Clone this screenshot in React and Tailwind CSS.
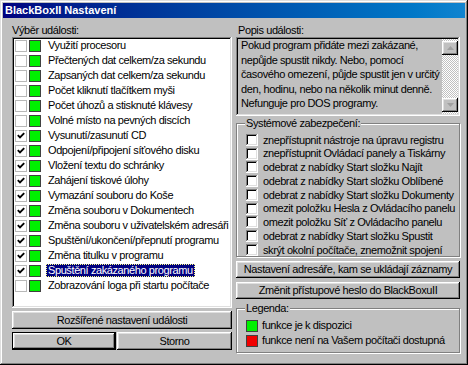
import React from 'react';

const raised = 'shadow-[inset_-1px_-1px_#000,inset_1px_1px_#fff,inset_-2px_-2px_#808080,inset_2px_2px_#dfdfdf]';
const sunken = 'shadow-[inset_-1px_-1px_#fff,inset_1px_1px_#808080,inset_-2px_-2px_#dfdfdf,inset_2px_2px_#000]';

const events = [
  ['Využití procesoru', false],
  ['Přečtených dat celkem/za sekundu', false],
  ['Zapsaných dat celkem/za sekundu', false],
  ['Počet kliknutí tlačítkem myši', false],
  ['Počet úhozů a stisknuté klávesy', false],
  ['Volné místo na pevných discích', false],
  ['Vysunutí/zasunutí CD', true],
  ['Odpojení/připojení síťového disku', true],
  ['Vložení textu do schránky', true],
  ['Zahájení tiskové úlohy', true],
  ['Vymazání souboru do Koše', true],
  ['Změna souboru v Dokumentech', true],
  ['Změna souboru v uživatelském adresáři', true],
  ['Spuštění/ukončení/přepnutí programu', true],
  ['Změna titulku v programu', true],
  ['Spuštění zakázaného programu', true, true],
  ['Zobrazování loga při startu počítače', false],
];

const security = [
  'znepřístupnit nástroje na úpravu registru',
  'znepřístupnit Ovládací panely a Tiskárny',
  'odebrat z nabídky Start složku Najít',
  'odebrat z nabídky Start složku Oblíbené',
  'odebrat z nabídky Start složku Dokumenty',
  'omezit položku Hesla z Ovládacího panelu',
  'omezit položku Síť z Ovládacího panelu',
  'odebrat z nabídky Start složku Spustit',
  'skrýt okolní počítače, znemožnit spojení',
];

const Check = () => (
  <svg width="8" height="7" viewBox="0 0 8 7" className="block">
    <path d="M0.8 3.2 L3 5.4 L7.2 1.2" fill="none" stroke="#000" strokeWidth="1.9" />
  </svg>
);

const Arrow = ({ down }) => (
  <svg width="7" height="4" viewBox="0 0 7 4" className="block">
    <path d={down ? 'M0 0 H7 L3.5 4 Z' : 'M0 4 H7 L3.5 0 Z'} fill="#a0a0a0" />
  </svg>
);

const Button = ({ children, className = '' }) => (
  <div className={`flex items-center justify-center bg-[#c0c0c0] ${raised} ${className}`}>{children}</div>
);

const Group = ({ label, className = '', children }) => (
  <div className={`relative border border-[#808080] shadow-[inset_1px_1px_#fff,1px_1px_#fff] ${className}`}>
    <span className="absolute -top-[8px] left-[8px] bg-[#c0c0c0] px-[1px] leading-[14px]">{label}</span>
    {children}
  </div>
);

export default function App() {
  return (
    <div
      className={`w-[468px] h-[365px] bg-[#c0c0c0] p-[3px] text-[11px] tracking-[-0.4px] text-black shadow-[inset_-1px_-1px_#000,inset_1px_1px_#dfdfdf,inset_-2px_-2px_#808080,inset_2px_2px_#fff] flex flex-col`}
      style={{ fontFamily: '"Liberation Sans", Arial, sans-serif' }}
    >
      <div className="h-[15px] flex items-center pl-[2px] bg-gradient-to-r from-[#000080] to-[#1084d0]">
        <span className="text-white font-bold tracking-normal leading-none">BlackBoxII Nastavení</span>
      </div>

      <div className="flex gap-[4px] pl-[9px] pt-[5px]">
        {/* left column */}
        <div className="w-[220px] flex flex-col">
          <div className="h-[14px] leading-[14px] pl-[0px]">Výběr události:</div>
          <div className={`h-[271px] bg-white ${sunken} pt-[1px] pl-[3px]`}>
            {events.map(([name, checked, selected]) => (
              <div key={name} className="h-[15px] flex items-center">
                <div className="w-[12px] h-[12px] bg-white border border-[#b8b8b8] flex items-center justify-center">
                  {checked && <Check />}
                </div>
                <div className="w-[12px] h-[12px] ml-[2px] bg-[#00f000] border border-[#404040]" />
                <span
                  className={`ml-[5px] h-[13px] leading-[11px] px-[1px] border border-dotted whitespace-nowrap ${
                    selected ? 'bg-[#000080] text-white border-[#ffff80]' : 'border-transparent'
                  }`}
                >
                  {name}
                </span>
              </div>
            ))}
          </div>
          <Button className="h-[18px] mt-[3px]">Rozšířené nastavení události</Button>
          <div className="flex gap-[1px] mt-[3px]">
            <div className="w-[104px] h-[18px] border border-black">
              <Button className="h-full">OK</Button>
            </div>
            <Button className="flex-1 h-[18px]">Storno</Button>
          </div>
        </div>

        {/* right column */}
        <div className="w-[224px] flex flex-col">
          <div className="h-[14px] leading-[14px] pl-[2px]">Popis události:</div>
          <div className={`h-[79px] bg-[#c0c0c0] ${sunken} flex p-[2px]`}>
            <div className="flex-1 pl-[3px] pr-[2px] -mt-[1px] leading-[14.6px]">
              Pokud program přidáte mezi zakázané, nepůjde spustit nikdy. Nebo, pomocí časového omezení, půjde spustit jen v určitý den, hodinu, nebo na několik minut denně. Nefunguje pro DOS programy.
            </div>
            <div className="w-[16px] flex flex-col py-[2px] bg-[repeating-conic-gradient(#c0c0c0_0%_25%,#ffffff_0%_50%)] bg-[length:2px_2px]">
              <Button className="h-[14px]"><Arrow /></Button>
              <div className="flex-1" />
              <Button className="h-[14px]"><Arrow down /></Button>
            </div>
          </div>

          <Group label="Systémové zabezpečení:" className="mt-[7px] h-[134px] pt-[9px] pl-[9px]">
            {security.map((s) => (
              <div key={s} className="h-[13.75px] flex items-center">
                <div className={`w-[12px] h-[12px] bg-white ${sunken}`} />
                <span className="ml-[5px] whitespace-nowrap">{s}</span>
              </div>
            ))}
          </Group>

          <Button className="h-[17px] mt-[4px]">Nastavení adresáře, kam se ukládají záznamy</Button>
          <Button className="h-[17px] mt-[4px]">Změnit přístupové heslo do BlackBoxuII</Button>

          <Group label="Legenda:" className="mt-[9px] h-[45px] pt-[9px] pl-[9px]">
            <div className="h-[15px] flex items-center">
              <div className="w-[12px] h-[12px] bg-[#00f000] border border-[#404040]" />
              <span className="ml-[4px]">funkce je k dispozici</span>
            </div>
            <div className="h-[15px] flex items-center">
              <div className="w-[12px] h-[12px] bg-[#f00000] border border-[#404040]" />
              <span className="ml-[4px]">funkce není na Vašem počítači dostupná</span>
            </div>
          </Group>
        </div>
      </div>
    </div>
  );
}
